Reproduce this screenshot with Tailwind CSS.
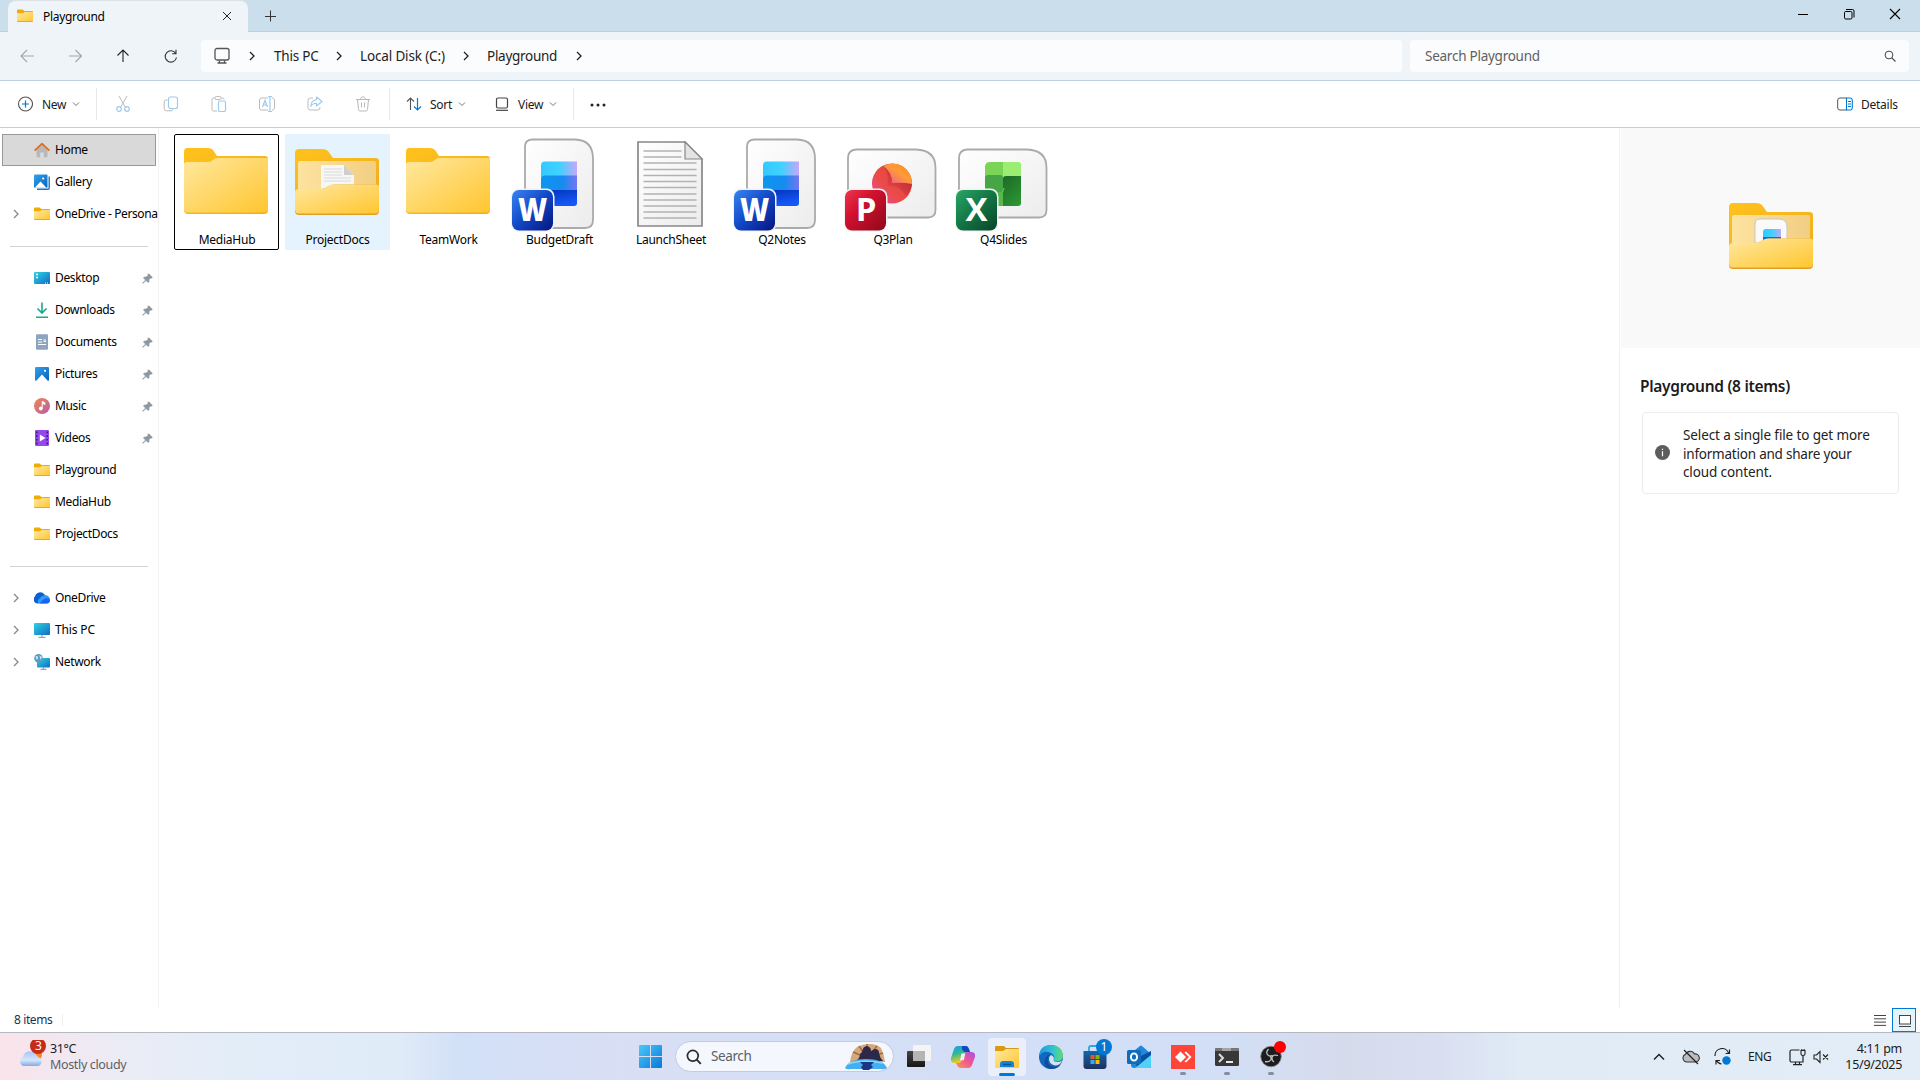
<!DOCTYPE html>
<html lang="en">
<head>
<meta charset="utf-8">
<title>Playground - File Explorer</title>
<script src="https://cdn.jsdelivr.net/npm/@tailwindcss/browser@4"></script>
</head>
<body class="w-[1920px] h-[1080px] overflow-hidden bg-white font-['Noto_Sans',sans-serif] text-[12px] leading-none text-[#1b1b1b] flex flex-col whitespace-nowrap">

<svg width="0" height="0" class="absolute">
  <defs>
    <linearGradient id="fold" x1="0" y1="0" x2="1" y2="1"><stop offset="0" stop-color="#ffe8a0"/><stop offset="1" stop-color="#ffc62f"/></linearGradient>
    <linearGradient id="foldb" x1="0" y1="0" x2="1" y2="1"><stop offset="0" stop-color="#ffc21c"/><stop offset="1" stop-color="#eeae1e"/></linearGradient>
    <linearGradient id="foldi" x1="0" y1="0" x2="1" y2="0"><stop offset="0" stop-color="#fde3a0"/><stop offset="1" stop-color="#f1ce82"/></linearGradient>
    <linearGradient id="page" x1="0" y1="0" x2="1" y2="1"><stop offset="0" stop-color="#ffffff"/><stop offset="1" stop-color="#ececec"/></linearGradient>
    <linearGradient id="w1"><stop offset="0" stop-color="#33c9ff"/><stop offset=".5" stop-color="#3dd2ff"/><stop offset="1" stop-color="#c3a8f8"/></linearGradient>
    <linearGradient id="w2"><stop offset="0" stop-color="#0c97ee"/><stop offset=".6" stop-color="#168bf0"/><stop offset="1" stop-color="#7676ee"/></linearGradient>
    <linearGradient id="w3" x2=".4" y2="1"><stop offset="0" stop-color="#0232b8"/><stop offset="1" stop-color="#1558f8"/></linearGradient>
    <linearGradient id="wb" x1="0" y1="0" x2="1" y2="1"><stop offset="0" stop-color="#3a84f4"/><stop offset=".5" stop-color="#1147c4"/><stop offset="1" stop-color="#061580"/></linearGradient>
    <linearGradient id="pb" x1="0" y1="0" x2="1" y2="1"><stop offset="0" stop-color="#f0354c"/><stop offset=".4" stop-color="#d0102e"/><stop offset="1" stop-color="#8c0a1c"/></linearGradient>
    <linearGradient id="xb" x1="0" y1="0" x2="1" y2="1"><stop offset="0" stop-color="#2aa765"/><stop offset=".5" stop-color="#127444"/><stop offset="1" stop-color="#0a4429"/></linearGradient>
    <linearGradient id="blue" x1="0" y1="0" x2="1" y2="1"><stop offset="0" stop-color="#2ea3ee"/><stop offset="1" stop-color="#0a62bd"/></linearGradient>
    <linearGradient id="teal" x1="0" y1="0" x2="1" y2="1"><stop offset="0" stop-color="#31d3e2"/><stop offset="1" stop-color="#0e6cc4"/></linearGradient>
    <linearGradient id="sky" x1="0" y1="0" x2="1" y2="1"><stop offset="0" stop-color="#4cc8fb"/><stop offset="1" stop-color="#0878d6"/></linearGradient>

    <symbol id="folder16" viewBox="0 0 16 16"><path d="M0 2.600C0 2 .5 1.500 1 1.500h4.600L7.500 3H15.200c.5 0 .8.3.8.8V6H0z" fill="#f2a90d"/><path d="M0 5.200h6l1.600-1.200H16v9.200c0 .5-.4.8-.8.8H.8c-.4 0-.8-.3-.8-.8z" fill="url(#fold)"/><path d="M.3 13.500h15.400" stroke="#e6a320" stroke-width=".9"/></symbol>
    <symbol id="folderbig" viewBox="0 0 84 66"><path d="M0 4Q0 0 3 0H24Q27 0 29 2L33 8H81Q84 8 84 11V62Q84 66 80 66H4Q0 66 0 62z" fill="url(#foldb)"/><path d="M0 16.500Q0 14 3 14H24Q27 14 29 12L31 10.500Q32 10 34 10H84V61Q84 64.500 80 64.500H4Q0 64.500 0 61z" fill="url(#fold)"/></symbol>
    <symbol id="folderback" viewBox="0 0 84 66"><path d="M0 4Q0 0 4 0H27Q31 0 33 2L38 9H80Q84 9 84 12V44H0z" fill="url(#foldb)"/><path d="M3 14Q3 12 5 12H79Q81 12 81 14V42H3z" fill="url(#foldi)"/></symbol>
    <symbol id="folderfront" viewBox="0 0 84 66"><path d="M0 43Q0 40 4 40H26Q29 40 32 38L35 36.500Q37 35.500 40 35.500H81Q84 35.500 84 38V62Q84 66 80 66H4Q0 66 0 62z" fill="#dfa02a"/><path d="M0 43Q0 40 4 40H26Q29 40 32 38L35 36.500Q37 35.500 40 35.500H81Q84 35.500 84 38V60.500Q84 64.500 80 64.500H4Q0 64.500 0 60.500z" fill="url(#fold)"/></symbol>
    <symbol id="pin" viewBox="0 0 12 12"><path d="M7.200.8 11.200 4.800 10 5.600 9.400 5.400 7.600 7.200 7.500 9.600 6.600 10.300 4.300 8 1.400 10.900.8 11.200 1.100 10.600 4 7.700 1.700 5.400 2.400 4.500 4.800 4.400 6.600 2.600 6.400 2z" fill="#8c979e" stroke="#8c979e" stroke-width=".9"/></symbol>
    <symbol id="chev" viewBox="0 0 8 12"><path d="M2 2l4 4-4 4" fill="none" stroke="currentColor" stroke-width="1.300"/></symbol>
    <symbol id="down" viewBox="0 0 8 6"><path d="M1 1.500l3 3 3-3" fill="none" stroke="#777" stroke-width="1"/></symbol>
    <symbol id="worddoc" viewBox="0 0 105 100"><path d="M25 5.500H68Q86 6 86 25V86Q86 94 78 94H25Q18 94 18 87V12.500Q18 6 25 5.500z" fill="url(#page)" stroke="#aaa" stroke-width="1.800"/><path d="M34 31.500Q34 27.500 38 27.500H70V46H34z" fill="url(#w1)"/><path d="M34 45.500Q34 41.500 38 41.500H70V60H34z" fill="url(#w2)"/><path d="M34 60Q34 56 38 56H70V69Q70 72 67 72H34z" fill="url(#w3)"/><rect x="4" y="54.500" width="43.500" height="43" rx="8" fill="#f2f2f2"/><rect x="5" y="56" width="41" height="40.500" rx="7" fill="url(#wb)"/><text x="25.500" y="86.500" text-anchor="middle" font-family="Open Sans, sans-serif" font-weight="800" font-size="32" textLength="29" lengthAdjust="spacingAndGlyphs" fill="#fff">W</text></symbol>
    <symbol id="widedoc" viewBox="0 0 105 100"><path d="M16 15.500H76Q95.500 16 95.500 34V76Q95.500 83.500 88 83.500H16Q8 83.500 8 76V24Q8 16 16 15.500z" fill="url(#page)" stroke="#aaa" stroke-width="1.800"/></symbol>
  </defs>
</svg>

<!-- Title bar -->
<header class="h-8 shrink-0 flex items-stretch bg-[#cbdeeb] border-b border-[#bccfdf]">
  <div class="ml-2 w-[240px] h-8 rounded-t-lg bg-[#eff4f9] flex items-center pl-[9px] pr-[15px] border-t border-[#dde2e6] pb-px">
    <svg class="size-4"><use href="#folder16"/></svg>
    <span class="ml-[10px] pt-px tracking-[-0.32px] text-black">Playground</span>
    <svg class="ml-auto size-3" viewBox="0 0 12 12"><path d="M2 2l8 8M10 2l-8 8" stroke="#222" stroke-width="1"/></svg>
  </div>
  <svg class="ml-[17px] mt-[10px] size-3" viewBox="0 0 12 12"><path d="M5.500 .5v11M0 6.500h11" stroke="#333"/></svg>
  <div class="ml-auto mr-[19px] mt-2 flex gap-[34px] h-3">
    <svg class="size-3" viewBox="0 0 12 12"><path d="M1 6.500h10" stroke="#000"/></svg>
    <svg class="size-3" viewBox="0 0 12 12"><path d="M3 1.500h6.500a1.500 1.500 0 0 1 1.500 1.500V9.500" fill="none" stroke="#000"/><rect x="1.500" y="3.500" width="7.500" height="7.500" rx="1.200" fill="none" stroke="#000"/></svg>
    <svg class="size-3" viewBox="0 0 12 12"><path d="M1 1l10 10M11 1l-10 10" stroke="#000" stroke-width="1.100"/></svg>
  </div>
</header>

<!-- Address row -->
<nav class="h-[49px] shrink-0 bg-[#eff4f9] border-b border-[#bccfdf] flex items-center pl-[19px] pr-[11px]">
  <div class="flex gap-8 w-[182px]">
    <svg class="size-4 shrink-0" viewBox="0 0 16 16"><path d="M2 8h13M8 2 2 8l6 6" fill="none" stroke="#a0a5a9" stroke-width="1.100"/></svg>
    <svg class="size-4 shrink-0" viewBox="0 0 16 16"><path d="M2 8h12.500M8.500 2l6 6-6 6" fill="none" stroke="#a0a5a9" stroke-width="1.100"/></svg>
    <svg class="size-4 shrink-0" viewBox="0 0 16 16"><path d="M8 14V2M2.500 7.500 8 2l5.500 5.500" fill="none" stroke="#222" stroke-width="1.100"/></svg>
    <svg class="size-4 shrink-0" viewBox="0 0 16 16"><path d="M12.800 5.500A5.700 5.700 0 1 0 13.500 9.500M13 1.800v3.900H9.200" fill="none" stroke="#333" stroke-width="1.100"/></svg>
  </div>
  <div class="w-[1201px] h-8 rounded bg-[#fbfcfe] flex items-center pl-[13px] text-[13.5px] text-[#222] [&_span]:pt-[2px]">
    <svg class="w-4 h-[18px]" viewBox="0 0 16 18"><rect x="1" y="1.500" width="14" height="11.500" rx="2" fill="none" stroke="#555" stroke-width="1.300"/><path d="M5.500 13.500v2M10.500 13.500v2M3.500 16h9" stroke="#555" stroke-width="1.300" fill="none"/></svg>
    <svg class="ml-[18px] w-2 h-3"><use href="#chev"/></svg>
    <span class="ml-[18px] w-[45px] tracking-[-0.2px]">This PC</span>
    <svg class="ml-[16px] w-2 h-3"><use href="#chev"/></svg>
    <span class="ml-[17px] w-[86px] tracking-[-0.15px]">Local Disk (C:)</span>
    <svg class="ml-[16px] w-2 h-3"><use href="#chev"/></svg>
    <span class="ml-[17px] w-[72px] tracking-[-0.28px]">Playground</span>
    <svg class="ml-[16px] w-2 h-3"><use href="#chev"/></svg>
  </div>
  <div class="ml-2 flex-1 h-8 rounded bg-[#fbfcfe] flex items-center pl-[15px] pr-[13px] justify-between text-[13.5px] text-[#606060]">
    <span class="tracking-[-0.25px] pt-[2px]">Search Playground</span>
    <svg class="size-3" viewBox="0 0 12 12"><circle cx="5" cy="5" r="3.900" fill="none" stroke="#444"/><path d="M7.800 7.800 11.500 11.500" stroke="#444" stroke-width="1.100"/></svg>
  </div>
</nav>

<!-- Command bar -->
<div class="h-[47px] shrink-0 border-b border-[#bccfdf] flex items-center [&>span]:pt-[2px]">
  <svg class="ml-[17px] size-4" viewBox="0 0 16 16"><circle cx="8.500" cy="8" r="7" fill="none" stroke="#555" stroke-width="1.100"/><path d="M8.500 4.500v7M5 8h7" stroke="#0078d4" stroke-width="1.200"/></svg>
  <span class="ml-[9px] w-[26px] tracking-[-0.3px]">New</span>
  <svg class="ml-1 w-2 h-[6px]"><use href="#down"/></svg>
  <div class="ml-4 w-px h-8 bg-[#e8e8e8]"></div>
  <div class="flex gap-8 ml-[18px] w-[292px]">
    <svg class="size-4 shrink-0" viewBox="0 0 16 16" fill="none"><path d="M4 0l6.200 11M12 0 5.800 11" stroke="#bbb"/><circle cx="4" cy="13" r="2.300" stroke="#9ccbef" stroke-width="1.200"/><circle cx="12" cy="13" r="2.300" stroke="#9ccbef" stroke-width="1.200"/></svg>
    <svg class="size-4 shrink-0" viewBox="0 0 16 16" fill="none"><path d="M4.500 4H3a1.800 1.800 0 0 0-1.800 1.800v6.500A2.500 2.500 0 0 0 3.700 14.800H8a1.800 1.800 0 0 0 1.800-1.500" stroke="#bbb"/><rect x="5.500" y="1" width="9" height="11.500" rx="2" stroke="#9ccbef" stroke-width="1.200"/></svg>
    <svg class="size-4 shrink-0" viewBox="0 0 16 16" fill="none"><path d="M4 2H2.500A1.500 1.500 0 0 0 1 3.500v10A1.500 1.500 0 0 0 2.500 15H6M10 2h1.500A1.500 1.500 0 0 1 13 3.500" stroke="#bbb"/><rect x="4" y=".5" width="6" height="3" rx="1.200" stroke="#bbb"/><rect x="7.500" y="5" width="7" height="10.500" rx="1.500" stroke="#9ccbef" stroke-width="1.200"/></svg>
    <svg class="size-4 shrink-0" viewBox="0 0 16 16" fill="none"><path d="M9 2H2.500A2 2 0 0 0 .5 4v8a2 2 0 0 0 2 2H9M13 2a2 2 0 0 1 2.500 2v8a2 2 0 0 1-2.500 2" stroke="#bbb"/><path d="M3.500 11 6 4.500 8.500 11M4.300 9h3.400M9 .5h4M11 .5v15M9 15.500h4" stroke="#9ccbef" stroke-width="1.200"/></svg>
    <svg class="size-4 shrink-0" viewBox="0 0 16 16" fill="none"><path d="M6 2H3.500A2.500 2.500 0 0 0 1 4.500v7A2.500 2.500 0 0 0 3.500 14h7a2.500 2.500 0 0 0 2.500-2.500V11" stroke="#bbb"/><path d="M9.500 1 15 5.500 9.500 10V7.300C7 7.300 5 8 3.800 10.500 4 6.500 6 4 9.500 3.800z" stroke="#9ccbef" stroke-width="1.100" stroke-linejoin="round"/></svg>
    <svg class="size-4 shrink-0" viewBox="0 0 16 16" fill="none"><path d="M1 3.500h14M5.500 3.500C5.500 0 10.500 0 10.500 3.500M2.500 3.500l1 10A1.700 1.700 0 0 0 5.200 15h5.600a1.700 1.700 0 0 0 1.700-1.500l1-10M6.500 6.500v5M9.500 6.500v5" stroke="#b8b8b8"/></svg>
  </div>
  <div class="w-px h-8 bg-[#e8e8e8] -ml-[18px]"></div>
  <svg class="ml-4 size-4" viewBox="0 0 16 16" fill="none"><path d="M4.500 14V2M1 5.500 4.500 2 8 5.500" stroke="#555" stroke-width="1.100"/><path d="M11.500 2v12M8 10.500l3.500 3.500L15 10.500" stroke="#0078d4" stroke-width="1.200"/></svg>
  <span class="ml-2 w-[24px] tracking-[-0.3px]">Sort</span>
  <svg class="ml-1 w-2 h-[6px]"><use href="#down"/></svg>
  <svg class="ml-[28px] size-4" viewBox="0 0 16 16" fill="none"><rect x="2.500" y="2" width="11" height="10" rx="1.500" stroke="#444" stroke-width="1.200"/><path d="M2 14.300h12" stroke="#444" stroke-width="1.200"/></svg>
  <span class="ml-2 w-[27px] tracking-[-0.3px]">View</span>
  <svg class="ml-1 w-2 h-[6px]"><use href="#down"/></svg>
  <div class="ml-4 w-px h-8 bg-[#e8e8e8]"></div>
  <svg class="ml-4 w-4 h-4" viewBox="0 0 16 16"><g fill="#222"><circle cx="2" cy="9" r="1.500"/><circle cx="8" cy="9" r="1.500"/><circle cx="14" cy="9" r="1.500"/></g></svg>
  <svg class="ml-auto w-4 h-[14px]" viewBox="0 0 16 14" fill="none"><path d="M9.500 1H3A2.200 2.200 0 0 0 .7 3v8A2.200 2.200 0 0 0 3 13h6.500" stroke="#555"/><path d="M9.500 1H13A2.200 2.200 0 0 1 15.300 3v8A2.200 2.200 0 0 1 13 13H9.500zM11 4.500h3M11 7h3M11 9.500h3" stroke="#0078d4" stroke-width="1.100"/></svg>
  <span class="ml-[8px] mr-[23px] w-[36px] tracking-[-0.25px]">Details</span>
</div>

<!-- Content -->
<main class="h-[880px] shrink-0 flex text-black">
  <aside class="w-[159px] border-r border-[#f1f1f1] pt-[6px] tracking-[-0.35px]">
    <div class="ml-[2px] w-[154px] h-8 border border-[#999] bg-[#d9d9d9] flex items-center pl-[31px]"><svg class="size-4 mr-[5px]" viewBox="0 0 16 16"><path d="M2.500 7 8 2l5.500 5v7.500c0 .5-.3.8-.8.8H9.800V10.500H6.200v4.800H3.300c-.5 0-.8-.3-.8-.8z" fill="#b8b8b8"/><path d="M.6 8.600 8 1.600l7.400 7" fill="none" stroke="#e06c1b" stroke-width="1.700" stroke-linejoin="round"/></svg><span>Home</span></div>
    <div class="h-8 flex items-center pl-[34px]"><svg class="size-4 mr-[5px]" viewBox="0 0 16 16"><path d="M3 15.200h11a1.200 1.200 0 0 0 1.200-1.200V2.500" fill="none" stroke="#1877c9" stroke-width="1.400"/><rect x="0" y=".5" width="13.500" height="13.300" rx="1" fill="url(#blue)"/><path d="M.8 13.800 6.500 7.500l6 6.300z" fill="#fff"/><circle cx="9.200" cy="4.500" r="1.100" fill="#fff"/></svg><span>Gallery</span></div>
    <div class="h-8 flex items-center pl-[12px]"><svg class="w-2 h-3 text-[#888] mr-[14px] shrink-0"><use href="#chev"/></svg><svg class="size-4 mr-[5px] shrink-0"><use href="#folder16"/></svg><span class="tracking-[-0.38px]">OneDrive - Persona</span></div>
    <div class="h-8 flex items-center pl-[10px]"><div class="w-[138px] h-px bg-[#d3d3d3]"></div></div>
    <div class="h-8 flex items-center pl-[34px] pr-[5px]"><svg class="size-4 mr-[5px]" viewBox="0 0 16 16"><rect y="2" width="16" height="12" rx="1" fill="url(#teal)"/><path d="M2 4.500h2M2 7.500h2" stroke="#fff" stroke-width="1.400"/><path d="M11 13h1M13 13h1" stroke="#fff"/></svg><span>Desktop</span><svg class="ml-auto size-[11px]"><use href="#pin"/></svg></div>
    <div class="h-8 flex items-center pl-[34px] pr-[5px]"><svg class="size-4 mr-[5px]" viewBox="0 0 16 16"><path d="M8 .5v10M3.500 6.500 8 11l4.500-4.500M2 15.200h12" fill="none" stroke="#16ab8c" stroke-width="1.600"/></svg><span>Downloads</span><svg class="ml-auto size-[11px]"><use href="#pin"/></svg></div>
    <div class="h-8 flex items-center pl-[34px] pr-[5px]"><svg class="size-4 mr-[5px]" viewBox="0 0 16 16"><rect x="2" y=".3" width="12" height="15.400" rx="1" fill="#8da4bf"/><path d="M4 5.500h4M4 8h4M4 10.500h8M9.500 6h2.500M9.500 7.500h2.500" stroke="#fff" stroke-width="1.200"/></svg><span>Documents</span><svg class="ml-auto size-[11px]"><use href="#pin"/></svg></div>
    <div class="h-8 flex items-center pl-[34px] pr-[5px]"><svg class="size-4 mr-[5px]" viewBox="0 0 16 16"><rect x="1" y="1" width="14" height="14" rx="1.200" fill="url(#blue)"/><path d="M2 15 8 8.500 14 15z" fill="#fff"/><circle cx="11" cy="4.800" r="1.100" fill="#fff"/></svg><span>Pictures</span><svg class="ml-auto size-[11px]"><use href="#pin"/></svg></div>
    <div class="h-8 flex items-center pl-[34px] pr-[5px]"><svg class="size-4 mr-[5px]" viewBox="0 0 16 16"><linearGradient id="mu" x1="0" y1="0" x2="1" y2="1"><stop stop-color="#f08a52"/><stop offset="1" stop-color="#b85aa8"/></linearGradient><circle cx="8" cy="8" r="8" fill="url(#mu)"/><circle cx="6.800" cy="10.500" r="1.900" fill="#fff"/><path d="M8.200 10.500V3.300L11 4.800v1.800L8.900 5.700" fill="#fff" stroke="#fff" stroke-width=".8"/></svg><span>Music</span><svg class="ml-auto size-[11px]"><use href="#pin"/></svg></div>
    <div class="h-8 flex items-center pl-[34px] pr-[5px]"><svg class="size-4 mr-[5px]" viewBox="0 0 16 16"><rect x="1" y="0" width="14" height="16" rx="1" fill="#9449e8"/><path d="M2.800 1.500v13M13.200 1.500v13" stroke="#3d1a85" stroke-width="1.600" stroke-dasharray="1.700 2"/><path d="M5.800 4.500v7L11.500 8z" fill="#fff"/></svg><span>Videos</span><svg class="ml-auto size-[11px]"><use href="#pin"/></svg></div>
    <div class="h-8 flex items-center pl-[34px]"><svg class="size-4 mr-[5px]"><use href="#folder16"/></svg><span>Playground</span></div>
    <div class="h-8 flex items-center pl-[34px]"><svg class="size-4 mr-[5px]"><use href="#folder16"/></svg><span>MediaHub</span></div>
    <div class="h-8 flex items-center pl-[34px]"><svg class="size-4 mr-[5px]"><use href="#folder16"/></svg><span>ProjectDocs</span></div>
    <div class="h-8 flex items-center pl-[10px]"><div class="w-[138px] h-px bg-[#d3d3d3]"></div></div>
    <div class="h-8 flex items-center pl-[12px]"><svg class="w-2 h-3 text-[#888] mr-[14px]"><use href="#chev"/></svg><svg class="size-4 mr-[5px]" viewBox="0 0 16 16"><path d="M4 13.500A4 4 0 0 1 1 6.500 5.300 5.300 0 0 1 10.500 4.500L14 8z" fill="#0c5fd0"/><path d="M4.500 13.500A3.800 3.800 0 0 1 4 10C6 8 8 5 11 5.300A4.500 4.500 0 0 1 16 10a3.600 3.600 0 0 1-3.500 3.500z" fill="#2b9bf6"/><path d="M5 13.500C7 13.500 9 8 13 8.300A3.500 3.500 0 0 1 16 10a3.600 3.600 0 0 1-3.500 3.500z" fill="#1d62ee"/></svg><span>OneDrive</span></div>
    <div class="h-8 flex items-center pl-[12px]"><svg class="w-2 h-3 text-[#888] mr-[14px]"><use href="#chev"/></svg><svg class="size-4 mr-[5px]" viewBox="0 0 16 16"><rect y="1" width="16" height="12" rx="1" fill="url(#teal)"/><path d="M8 13v2M4.500 15.400h7" stroke="#97a4ae" stroke-width="1.200"/></svg><span class="tracking-[-0.15px]">This PC</span></div>
    <div class="h-8 flex items-center pl-[12px]"><svg class="w-2 h-3 text-[#888] mr-[14px]"><use href="#chev"/></svg><svg class="size-4 mr-[5px]" viewBox="0 0 16 16"><rect x="3" y="4" width="13" height="9.500" rx="1" fill="url(#teal)"/><path d="M9.500 13v2M6.500 15.400h6" stroke="#97a4ae" stroke-width="1.200"/><circle cx="4.500" cy="4.300" r="4.300" fill="#5b9cc4"/><path d="M1.500 2.500Q4 1 4 3.500T2.500 5.500zM5.500 1.500 8 3 6.500 6z" fill="#cfe6f3"/></svg><span>Network</span></div>
  </aside>

  <section class="flex-1 pt-[6px] pl-[15px] flex items-start gap-[6px] tracking-[-0.25px]">
    <figure class="w-[105px] h-[116px] border border-black rounded-[2px] flex flex-col items-start"><svg class="w-[84px] h-[66px] mt-[13px] ml-[9px]"><use href="#folderbig"/></svg><figcaption class="mt-[20px] pl-px w-full text-center">MediaHub</figcaption></figure>
    <figure class="w-[105px] h-[116px] bg-[#e5f3ff] flex flex-col items-start">
      <svg class="w-[84px] h-[66px] mt-[15px] ml-[10px] shrink-0"><use href="#folderback"/><path d="M26 16h23l10 10v30H26z" fill="#f7f7f7"/><path d="M49 16v10h10z" fill="#cfcfcf"/><path d="M29 20h18M29 23h18M29 26h18M29 29h27M29 32h27" stroke="#d9d9d9"/><use href="#folderfront"/></svg><figcaption class="mt-[19px] w-full text-center">ProjectDocs</figcaption></figure>
    <figure class="w-[105px] h-[116px] flex flex-col items-start"><svg class="w-[84px] h-[66px] mt-[14px] ml-[10px]"><use href="#folderbig"/></svg><figcaption class="mt-[20px] w-full text-center">TeamWork</figcaption></figure>
    <figure class="w-[105px] h-[116px] flex flex-col items-center"><svg class="w-[105px] h-[100px]" viewBox="0 0 105 100"><use href="#worddoc" width="105" height="100"/></svg><figcaption>BudgetDraft</figcaption></figure>
    <figure class="w-[105px] h-[116px] flex flex-col items-center"><svg class="w-[105px] h-[100px]" viewBox="0 0 105 100"><path d="M20 8H67L84 25V92H20z" fill="url(#page)" stroke="#888" stroke-width="1.700"/><path d="M25.500 17h38M25.500 23h38M25.500 29h53M25.500 35.500h53M25.500 41.500h53M25.500 47.500h53M25.500 53.500h53M25.500 60h53M25.500 66h53M25.500 72h53M25.500 78h53M25.500 84h53" stroke="#b2b2b2" stroke-width="1.700"/><path d="M67 8V25H84z" fill="#e4e4e4" stroke="#888" stroke-width="1.200"/></svg><figcaption class="pl-px">LaunchSheet</figcaption></figure>
    <figure class="w-[105px] h-[116px] flex flex-col items-center"><svg class="w-[105px] h-[100px]" viewBox="0 0 105 100"><use href="#worddoc" width="105" height="100"/></svg><figcaption class="pl-px">Q2Notes</figcaption></figure>
    <figure class="w-[105px] h-[116px] flex flex-col items-center"><svg class="w-[105px] h-[100px]" viewBox="0 0 105 100"><use href="#widedoc" width="105" height="100"/><linearGradient id="pc" x1="0" y1="1" x2="1" y2="0"><stop offset="0" stop-color="#ec4aa8"/><stop offset=".4" stop-color="#ea4b48"/><stop offset="1" stop-color="#e0442f"/></linearGradient><linearGradient id="pk" x1="0" y1="1" x2="1" y2="0"><stop stop-color="#ee4fa0"/><stop offset=".55" stop-color="#ff9a38"/><stop offset="1" stop-color="#ff8a14"/></linearGradient><linearGradient id="pd" x1="0" y1="1" x2="1" y2="0"><stop stop-color="#ec4f50"/><stop offset="1" stop-color="#b5202e"/></linearGradient><circle cx="52" cy="49.500" r="20" fill="url(#pc)"/><path d="M43 32Q54 27 62 32Q72 38 72 50H52Q53 39 43 32z" fill="url(#pk)"/><path d="M43 32Q52 38 52 49Q63 48 72 50Q71 57 66 62Q59 50 47 52Q50 40 43 32z" fill="url(#pd)"/><rect x="4" y="54.500" width="43.500" height="43" rx="8" fill="#f2f2f2"/><rect x="5" y="56" width="41" height="40.500" rx="7" fill="url(#pb)"/><text x="26" y="87" text-anchor="middle" font-family="Open Sans, sans-serif" font-weight="700" font-size="33" fill="#fff">P</text></svg><figcaption class="pl-px">Q3Plan</figcaption></figure>
    <figure class="w-[105px] h-[116px] flex flex-col items-center"><svg class="w-[105px] h-[100px]" viewBox="0 0 105 100"><use href="#widedoc" width="105" height="100"/><linearGradient id="xg" x1="0" y1="0" x2="1" y2="1"><stop stop-color="#1b5c22"/><stop offset="1" stop-color="#2c9a34"/></linearGradient><path d="M34 33Q34 28 39 28H53V46H34z" fill="#7ad455"/><path d="M52 28H67Q70 28 70 31V44H52z" fill="#9bee72"/><rect x="34" y="41" width="18" height="18" rx="3" fill="#46a544"/><path d="M55 42H70V69Q70 72 67 72H40V58H52V45Q52 42 55 42z" fill="url(#xg)"/><path d="M53 56q0-2 2-2h-3v18H40V58h10q3 0 3-2z" fill="#55b84a"/><rect x="4" y="54.500" width="43.500" height="43" rx="8" fill="#f2f2f2"/><rect x="5" y="56" width="41" height="40.500" rx="7" fill="url(#xb)"/><text x="25.500" y="87" text-anchor="middle" font-family="Open Sans, sans-serif" font-weight="700" font-size="33" fill="#fff">X</text></svg><figcaption>Q4Slides</figcaption></figure>
  </section>

  <aside class="w-[301px] border-l border-[#f1f1f1] pl-px">
    <div class="h-[220px] bg-[#f9f9f9] pt-[75px] pl-[108px]">
      <svg class="w-[84px] h-[66px]"><use href="#folderback"/><path d="M26 21Q26 16 31 16H50Q58 16 58 24V50H26z" fill="#fafafa" stroke="#c5c5c5"/><path d="M34 29Q34 26 37 26H52V34H34z" fill="url(#w1)"/><path d="M34 34h18v8H34z" fill="#1768d8"/><use href="#folderfront"/></svg>
    </div>
    <h2 class="mt-[31px] ml-[19px] text-[15.500px] font-semibold tracking-[-0.3px] text-[#1b1b1b]">Playground (8 items)</h2>
    <div class="mt-[17px] ml-[21px] w-[257px] h-[82px] rounded border border-[#ececec] flex items-center pl-3 text-[#222]">
      <svg class="size-[15px]" viewBox="0 0 15 15"><circle cx="7.500" cy="7.500" r="7.500" fill="#5d5d5d"/><path d="M7.500 6.300v5M7.500 3.700v1.400" stroke="#fff" stroke-width="1.200"/></svg>
      <p class="ml-[13px] pt-[3px] text-[13.500px] leading-[18.500px] tracking-[-0.12px]">Select a single file to get more<br><span class="tracking-[-0.22px]">information and share your</span><br>cloud content.</p>
    </div>
  </aside>
</main>

<!-- Status bar -->
<footer class="h-[25px] shrink-0 border-b border-[#b3b8c2] flex items-center pl-[14px] pr-1 text-[#1e3255]">
  <span class="w-[49px] border-r border-[#eee] leading-[12px] tracking-[-0.4px]">8 items</span>
  <svg class="ml-auto mr-[6px] w-3 h-[11px]" viewBox="0 0 12 11"><path d="M0 .5h12M0 3.800h12M0 7.100h12M0 10.400h12" stroke="#444"/></svg>
  <div class="w-6 h-6 border border-[#0078d7] bg-[#e5f3fb] flex items-center justify-center"><svg class="w-3 h-3 mt-[2px] ml-px" viewBox="0 0 12 12"><rect x=".5" y=".5" width="11" height="8.500" fill="#fff" stroke="#444"/><path d="M0 11.500h12" stroke="#444"/></svg></div>
</footer>

<!-- Taskbar -->
<div class="h-[47px] shrink-0 flex items-center bg-[linear-gradient(90deg,#fae3ea_0px,#ecebf5_110px,#e2edf8_240px,#e0ebf8_400px,#d2e0f7_460px,#d9dff5_620px,#d5dff6_800px,#d2dff6_1220px,#d6dbec_1340px,#d9dff0_1440px,#e0ebf6_1520px,#e2edf7_1920px)]">
  <div class="w-[628px] h-full flex items-center">
    <div class="relative ml-[18px] w-[28px] h-[34px]">
      <svg class="w-[30px] h-[34px]" viewBox="0 0 30 34"><circle cx="19" cy="15" r="5" fill="#f58a20"/><linearGradient id="cl" x2="0" y2="1"><stop stop-color="#a9c6f4"/><stop offset=".6" stop-color="#d5e6fc"/><stop offset="1" stop-color="#83a9e4"/></linearGradient><path d="M6 26A4.700 4.700 0 0 1 5 17 7 7 0 0 1 17 13.500Q19 16 21 17.500A4.500 4.500 0 0 1 20 26z" fill="url(#cl)"/><circle cx="20" cy="6" r="8" fill="#c42b1c"/></svg>
      <span class="absolute left-[17px] top-0 text-[12px] text-white">3</span>
    </div>
    <div class="ml-[4px] text-[12.500px] leading-[16px] tracking-[-0.35px]"><div>31°C</div><div class="text-[#5c5f66]">Mostly cloudy</div></div>
  </div>
  <div class="w-[44px] h-full flex items-center justify-center"><svg class="size-[23px]" viewBox="0 0 23 23"><path d="M0 1Q0 0 1 0h10v11H0zM12 0h10q1 0 1 1v10H12zM0 12h11v11H1q-1 0-1-1zM12 12h11v10q0 1-1 1H12z" fill="url(#sky)"/></svg></div>
  <div class="ml-[3px] w-[219px] h-[31px] rounded-full bg-[#f4f7fd] border border-[#c2cbe0] flex items-center pl-[10px] pr-[6px] text-[#5c5f66]">
    <svg class="size-[16px]" viewBox="0 0 16 16"><circle cx="6.800" cy="6.800" r="5.400" fill="none" stroke="#2b2b2b" stroke-width="1.700"/><path d="M10.700 10.700 14.800 14.800" stroke="#2b2b2b" stroke-width="1.900"/></svg>
    <span class="ml-[9px] tracking-[-0.4px] text-[13.500px]">Search</span>
    <svg class="ml-auto w-[42px] h-[26px]" viewBox="0 0 42 26"><path d="M5 18Q6 8 12 3 18 0 24 0q8 0 12 4 3 6 4 14z" fill="#d8a877"/><path d="M22 14 8 8M22 14 14 2M22 14 22 0M22 14 32 2M22 14 38 9" stroke="#9a6e50" stroke-width="1.500"/><path d="M10 17q5-2 5-7l2-2q1-6 5-6 4 1 4 5l4-2q4 0 4 4 1 5 4 8z" fill="#2e2848"/><path d="M0 24Q4 15 21 15T42 24Q40 26 36 25H6Q2 26 0 24z" fill="#44aef0"/><path d="M3 20Q16 15 38 19" stroke="#8ed8fb" stroke-width="1.600" fill="none"/><path d="M15 18h14l-3 3 2 2-4 3h-6l-2-3 2-2z" fill="#1b3585"/></svg>
  </div>
  <div class="flex h-full items-center ml-[3px]">
    <div class="w-[44px] flex justify-center"><svg class="w-6 h-[23px]" viewBox="0 0 24 23"><linearGradient id="tv" x2="0" y2="1"><stop stop-color="#444"/><stop offset="1" stop-color="#171717"/></linearGradient><rect y="6" width="18" height="16" rx="1" fill="url(#tv)"/><rect x="6" y="0" width="18" height="16" rx="1" fill="#f4f4f4"/><path d="M6 6h12v10H6z" fill="#b5b5b5"/></svg></div>
    <div class="w-[44px] flex justify-center"><svg class="size-[24px]" viewBox="0 0 24 24"><defs><linearGradient id="c1" x1="0" x2=".3" y2="1"><stop stop-color="#199ce8"/><stop offset=".5" stop-color="#33b893"/><stop offset="1" stop-color="#f4cc1d"/></linearGradient><linearGradient id="c2" x1="1" x2="0" y2="1"><stop stop-color="#a552e8"/><stop offset=".5" stop-color="#f0588e"/><stop offset="1" stop-color="#ff9850"/></linearGradient></defs><path d="M7 1h8q2 0 3 3l1 3h-3q-2 0-3 3l-2 6q-1 2-3 2H3q-4-1-3-5l3-9q1-3 4-3z" fill="url(#c1)"/><path d="M11 1h4q2 0 3 3l1 3h-5q-2 0-3-3z" fill="#1248bf"/><path d="M17 23H9q-2 0-3-3l-1-2h3q2 0 3-3l2-6q1-2 3-2h5q4 1 3 5l-3 8q-1 3-4 3z" fill="url(#c2)"/><path d="M10.500 8.500h3.800l-1.500 6.800H9z" fill="#edf0fa"/></svg></div>
    <div class="w-[44px] h-full flex justify-center items-center">
      <div class="w-[38px] h-[38px] rounded bg-[#eaeff9] flex flex-col items-center pt-[8px]"><svg class="w-6 h-[22px] shrink-0" viewBox="0 0 24 22"><path d="M0 1q0-1 1-1h8l2 2h12q1 0 1 1v6H0z" fill="#dc9b0c"/><path d="M0 5h8l3-2h13v18q0 1-1 1H1q-1 0-1-1z" fill="url(#fold)"/><path d="M5 21v-3q0-3 3-3h8q3 0 3 3v3z" fill="#1684d8"/><path d="M8 18.500h8" stroke="#0b529c" stroke-width="1.500"/></svg><div class="mt-[5px] w-4 h-[3px] shrink-0 rounded-full bg-[#0078d4]"></div></div>
    </div>
    <div class="w-[44px] flex justify-center"><svg class="size-6" viewBox="0 0 24 24"><defs><linearGradient id="e1" x1="0" x2="1"><stop stop-color="#2396e2"/><stop offset=".6" stop-color="#33c4cf"/><stop offset="1" stop-color="#66de64"/></linearGradient></defs><circle cx="12" cy="12" r="12" fill="#1268bc"/><path d="M0 11Q1 0 12 0q11 0 12 10.500Q24 16 18 16.500 14 16.500 14.500 14.500 16.500 12 13.500 9 8 5 3 8z" fill="url(#e1)"/><path d="M9 12q-2 8 5 9.500 4 .8 8-2-4 5-11 4.500Q4 22 6 15q1-5 6-6-2 1-3 3z" fill="#124b98"/><path d="M12 10q4 2 2.500 4.500Q14.500 17 18 17q3 0 5.200-1.500Q21 20.500 16 20.500 10 19 10 14q0-3 2-4z" fill="#d8e1f4"/></svg></div>
    <div class="relative w-[44px] h-full flex justify-center items-center"><svg class="size-6" viewBox="0 0 24 24"><path d="M6 6V3q0-2 2-2h8q2 0 2 2v3" fill="none" stroke="#2fa5e8" stroke-width="1.800"/><linearGradient id="st" x2="0" y2="1"><stop stop-color="#1666a8"/><stop offset="1" stop-color="#1e315f"/></linearGradient><path d="M.5 6h23v15q0 3-3 3h-17q-3 0-3-3z" fill="url(#st)"/><path d="M7.500 10h4v4h-4z" fill="#f25022"/><path d="M12.500 10h4v4h-4z" fill="#7fba00"/><path d="M7.500 15h4v4h-4z" fill="#2fb0f0"/><path d="M12.500 15h4v4h-4z" fill="#ffb900"/></svg><span class="absolute left-[23px] top-[6px] size-4 rounded-full bg-[#0078d4] text-white text-center leading-4">1</span></div>
    <div class="w-[44px] flex justify-center"><svg class="size-6" viewBox="0 0 24 24"><path d="M3 9 13 1q1-1 2 0l9 8v12q0 2-2 2H7q-3 0-3-3z" fill="#2386d8"/><path d="M8 14 24 6v5L10 22z" fill="#0b4fa0"/><path d="M24 10v10q0 3-3 3H8z" fill="#4fd2f8"/><rect x="0" y="5" width="14" height="14" rx="1.500" fill="#0f6cbd"/><ellipse cx="7" cy="12" rx="3.100" ry="3.600" fill="none" stroke="#fff" stroke-width="1.900"/></svg></div>
    <div class="relative w-[44px] h-full flex justify-center items-center"><svg class="size-6" viewBox="0 0 24 24"><rect width="24" height="24" fill="#ff4438"/><path d="M9.500 6.500 15 12l-5.500 5.500L4 12zM13.500 7.500l1.500-1 5.500 5.500-5.500 5.500-1.500-1L18 12z" fill="#fff"/></svg><i class="absolute bottom-[5px] w-[6px] h-[3px] rounded-full bg-[#868d9b]"></i></div>
    <div class="relative w-[44px] h-full flex justify-center items-center"><svg class="size-6" viewBox="0 0 24 24"><rect y="3" width="24" height="18" rx="1.500" fill="#383838"/><path d="M0 6V4.500Q0 3 1.500 3h21Q24 3 24 4.500V6z" fill="#777"/><path d="M7 3h9v3H7z" fill="#a5a5a5"/><path d="M4 9l4 4-4 4" fill="none" stroke="#ddd" stroke-width="2"/><path d="M11 17h7" stroke="#fff" stroke-width="1.800"/></svg><i class="absolute bottom-[5px] w-[6px] h-[3px] rounded-full bg-[#868d9b]"></i></div>
    <div class="relative w-[44px] h-full flex justify-center items-center"><svg class="size-6" viewBox="0 0 24 24"><circle cx="12" cy="11.500" r="10.300" fill="#1d1c1f" stroke="#8a8a8a" stroke-width=".8"/><path d="M9.500 4Q6 8 9.500 10.500q2 1.200 4-.3M19 10.500q-5-1.500-6 2-.3 3 2 4.500M6 16.500q4.500 1 6-2 .5-2.500-1.500-4" fill="none" stroke="#bdbdbd" stroke-width="1.300"/></svg><i class="absolute left-[25px] top-[8px] size-3 rounded-full bg-[#f00]"></i><i class="absolute bottom-[5px] w-[6px] h-[3px] rounded-full bg-[#868d9b]"></i></div>
  </div>
  <div class="ml-auto mr-[18px] flex items-center">
    <svg class="w-3 h-3" viewBox="0 0 12 12"><path d="M1 8.500 6 3.500l5 5" fill="none" stroke="#1b1b1b" stroke-width="1.400"/></svg>
    <svg class="ml-[17px] w-[18px] h-4" viewBox="0 0 18 16"><path d="M5 13A4 4 0 0 1 3.500 5.300 5 5 0 0 1 12.500 5 4 4 0 0 1 14 13z" fill="#b9bcc0" stroke="#333" stroke-width="1.100"/><path d="M2 1l14 14" stroke="#222" stroke-width="1.300"/></svg>
    <svg class="ml-[14px] w-[18px] h-[18px]" viewBox="0 0 18 18"><path d="M1 8A7 7 0 0 1 14.500 5M15.500 1.500V5.500H11.500M2 16.500V12.500H6M2.500 12.500Q4 15.500 7.500 16" fill="none" stroke="#222" stroke-width="1.200"/><circle cx="12.500" cy="12.500" r="4.200" fill="#0078d7"/></svg>
    <span class="ml-[16px] w-[24px] text-[12px] tracking-[-0.4px] pt-px">ENG</span>
    <svg class="ml-[17px] w-[17px] h-[18px]" viewBox="0 0 17 18"><path d="M10.500 2H2.500A1.500 1.500 0 0 0 1 3.500v9A1.500 1.500 0 0 0 2.500 14H14V7.500M6.500 14v2.500M10.500 14v2.500M4 16.700h9" fill="none" stroke="#222" stroke-width="1.200"/><path d="M12 2.500h4v3.500q0 1.500-2 1.500t-2-1.500zM12.800 2.500V1M15.200 2.500V1" fill="none" stroke="#222" stroke-width="1.100"/></svg>
    <svg class="ml-[7px] w-[16px] h-[14px]" viewBox="0 0 16 14"><path d="M1 5h2.500L7 1.500v11L3.500 9H1zM10 4.500l5 5M15 4.500l-5 5" fill="none" stroke="#222" stroke-width="1.100"/></svg>
    <div class="ml-[14px] w-[59px] text-[12.500px] leading-[16px] tracking-[-0.3px] flex flex-col items-end"><span>4:11 pm</span><span>15/9/2025</span></div>
  </div>
</div>
</body>
</html>
